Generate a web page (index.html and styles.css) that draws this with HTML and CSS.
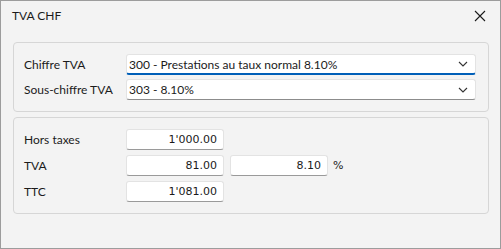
FILE: index.html
```html
<!DOCTYPE html>
<html lang="fr">
<head>
  <meta charset="UTF-8">
  <title>TVA CHF</title>
  <link rel="stylesheet" href="styles.css">
</head>
<body>

  <div class="window">
    <!-- Title bar -->
    <div class="titlebar">
      <span class="title">TVA CHF</span>
      <svg class="close" width="12" height="12" viewBox="0 0 12 12">
        <path d="M1 1 L11 11 M11 1 L1 11" stroke="#1a1a1a" stroke-width="1.1" fill="none"/>
      </svg>
    </div>

    <!-- Code selection -->
    <div class="panel codes">
      <label class="label">Chiffre TVA</label>
      <div class="select active">
        <span>300 - Prestations au taux normal 8.10%</span>
        <svg class="chevron" width="10" height="6" viewBox="0 0 10 6"><path d="M1 1 L5 5 L9 1" stroke="#333" stroke-width="1.1" fill="none"/></svg>
      </div>
      <label class="label">Sous-chiffre TVA</label>
      <div class="select">
        <span>303 - 8.10%</span>
        <svg class="chevron" width="10" height="6" viewBox="0 0 10 6"><path d="M1 1 L5 5 L9 1" stroke="#333" stroke-width="1.1" fill="none"/></svg>
      </div>
    </div>

    <!-- Amounts -->
    <div class="panel amounts">
      <label class="label">Hors taxes</label>
      <div class="field">1'000.00</div>
      <div></div>
      <div></div>

      <label class="label">TVA</label>
      <div class="field">81.00</div>
      <div class="field">8.10</div>
      <span class="unit">%</span>

      <label class="label">TTC</label>
      <div class="field">1'081.00</div>
      <div></div>
      <div></div>
    </div>
  </div>

</body>
</html>
```

FILE: styles.css
```css
* {
  margin: 0;
  padding: 0;
  box-sizing: border-box;
}
body {
  font-family: Lato, "Noto Sans", sans-serif;
  font-size: 12px;
  color: #1b1b1b;
  background-color: #f3f3f3;
}
.window {
  width: 501px;
  height: 249px;
  border: 1px solid #9c9c9c;
  background-color: #f3f3f3;
}
.titlebar {
  display: flex;
  justify-content: space-between;
  align-items: center;
  height: 29px;
  padding: 0 14px 0 11px;
}
.close {
  display: block;
}
.panel {
  margin: 12px 11px 0 12px;
  border: 1px solid #d6d6d6;
  border-radius: 4px;
  display: grid;
  padding: 11px 12px 11px 10px;
}
.codes {
  grid-template-columns: 102px 1fr;
  row-gap: 4px;
}
.amounts {
  margin-top: 5px;
  grid-template-columns: 96px 98px 98px 1fr;
  column-gap: 6px;
  row-gap: 5px;
}
.label {
  display: flex;
  align-items: center;
}
.select {
  height: 21px;
  display: flex;
  justify-content: space-between;
  align-items: center;
  padding: 0 7px 0 2px;
  background-color: #fff;
  border: 1px solid #e3e3e3;
  border-bottom-color: #8c8c8c;
  border-radius: 3px;
}
.select.active {
  border-bottom: 2px solid #005fb8;
}
.chevron {
  display: block;
}
.field {
  height: 21px;
  display: flex;
  justify-content: flex-end;
  align-items: center;
  padding: 0 6px;
  font-family: "DejaVu Sans", sans-serif;
  font-size: 11px;
  background-color: #fff;
  border: 1px solid #e3e3e3;
  border-bottom-color: #9a9a9a;
  border-radius: 3px;
}
.unit {
  display: flex;
  align-items: center;
  margin-left: -1px;
  font-family: "DejaVu Sans", sans-serif;
  font-size: 11px;
}
```
